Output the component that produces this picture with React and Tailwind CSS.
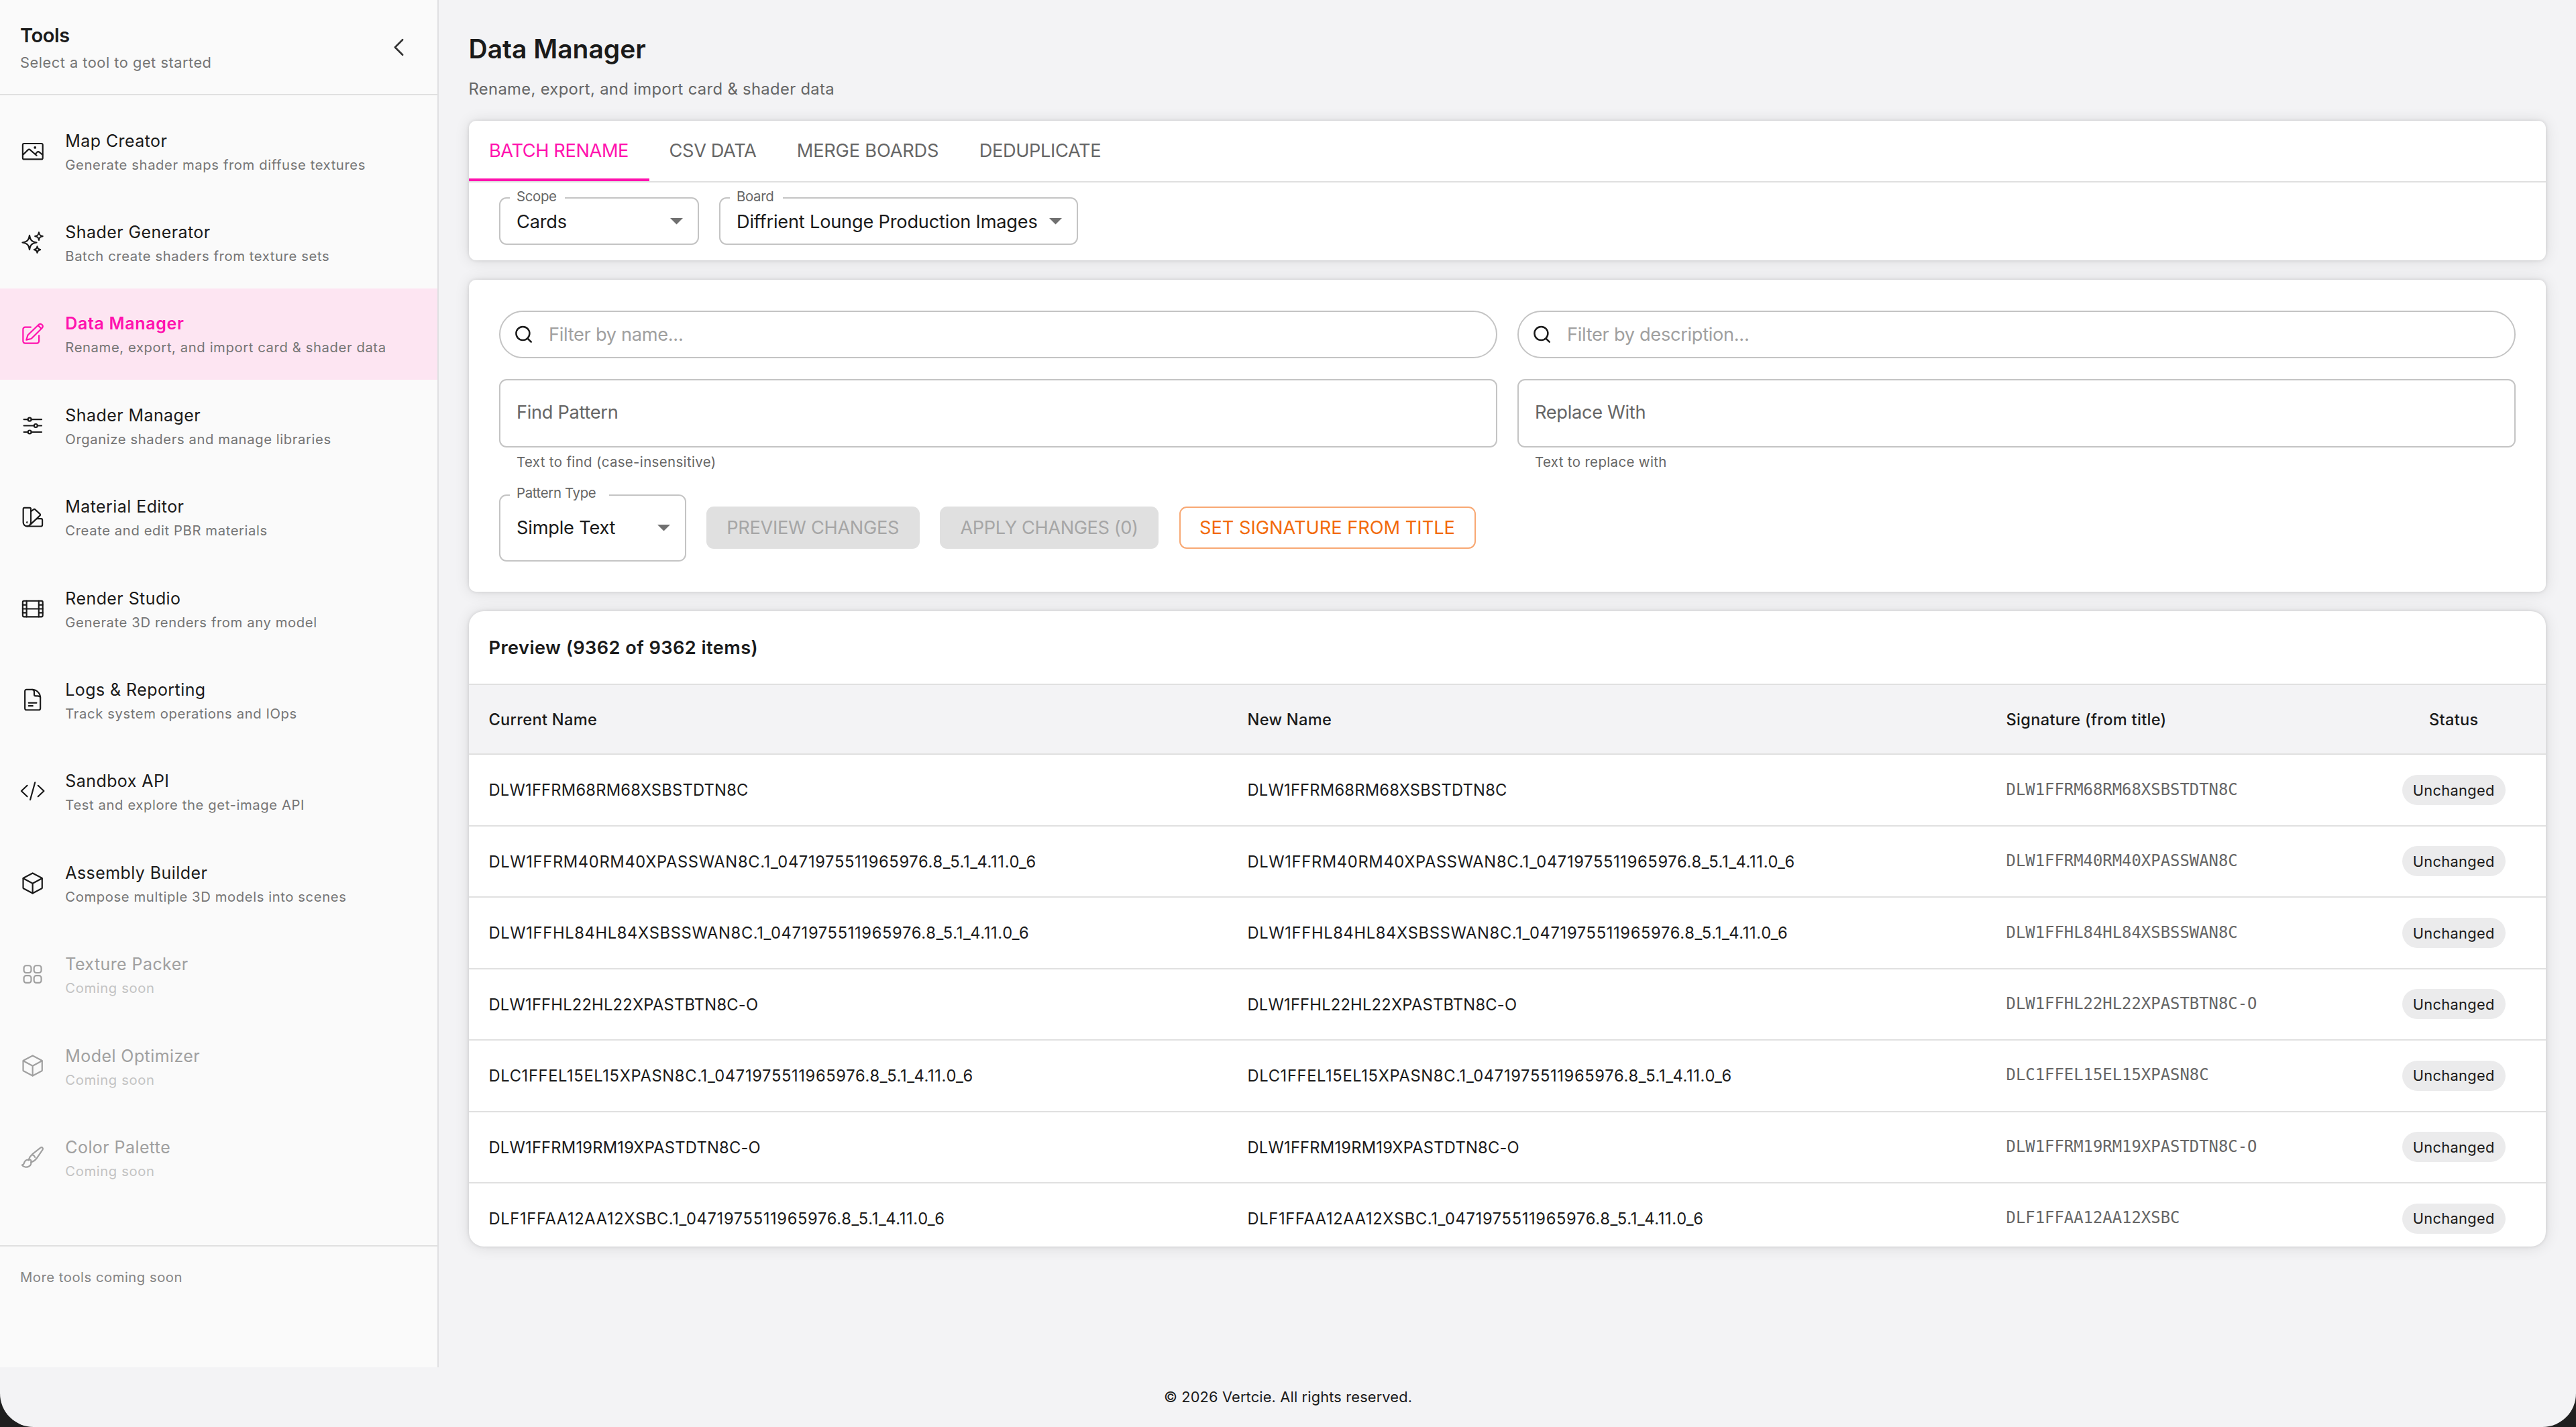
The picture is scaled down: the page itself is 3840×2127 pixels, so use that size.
const nav = [
  { icon: "image", title: "Map Creator", desc: "Generate shader maps from diffuse textures" },
  { icon: "sparkles", title: "Shader Generator", desc: "Batch create shaders from texture sets" },
  { icon: "edit", title: "Data Manager", desc: "Rename, export, and import card & shader data", active: true },
  { icon: "sliders", title: "Shader Manager", desc: "Organize shaders and manage libraries" },
  { icon: "swatch", title: "Material Editor", desc: "Create and edit PBR materials" },
  { icon: "film", title: "Render Studio", desc: "Generate 3D renders from any model" },
  { icon: "doc", title: "Logs & Reporting", desc: "Track system operations and IOps" },
  { icon: "code", title: "Sandbox API", desc: "Test and explore the get-image API" },
  { icon: "cube", title: "Assembly Builder", desc: "Compose multiple 3D models into scenes" },
  { icon: "grid", title: "Texture Packer", desc: "Coming soon", disabled: true },
  { icon: "cube", title: "Model Optimizer", desc: "Coming soon", disabled: true },
  { icon: "brush", title: "Color Palette", desc: "Coming soon", disabled: true },
];

const rows = [
  { name: "DLW1FFRM68RM68XSBSTDTN8C", signature: "DLW1FFRM68RM68XSBSTDTN8C" },
  { name: "DLW1FFRM40RM40XPASSWAN8C.1_0471975511965976.8_5.1_4.11.0_6", signature: "DLW1FFRM40RM40XPASSWAN8C" },
  { name: "DLW1FFHL84HL84XSBSSWAN8C.1_0471975511965976.8_5.1_4.11.0_6", signature: "DLW1FFHL84HL84XSBSSWAN8C" },
  { name: "DLW1FFHL22HL22XPASTBTN8C-O", signature: "DLW1FFHL22HL22XPASTBTN8C-O" },
  { name: "DLC1FFEL15EL15XPASN8C.1_0471975511965976.8_5.1_4.11.0_6", signature: "DLC1FFEL15EL15XPASN8C" },
  { name: "DLW1FFRM19RM19XPASTDTN8C-O", signature: "DLW1FFRM19RM19XPASTDTN8C-O" },
  { name: "DLF1FFAA12AA12XSBC.1_0471975511965976.8_5.1_4.11.0_6", signature: "DLF1FFAA12AA12XSBC" },
];

const glyphs = {
  image: (
    <>
      <rect x="2.5" y="4.5" width="19.2" height="15.1" rx="1.3" />
      <path d="M2.6 15.4 7.4 10.7c.7-.7 1.7-.7 2.4 0l6 5.2" />
      <path d="M14.7 14.6l1.3-1.6c.6-.8 1.8-.9 2.5-.2l3 2.5" />
      <circle cx="14.3" cy="8.3" r="0.5" fill="currentColor" />
    </>
  ),
  sparkles: (
    <>
      <path d="M9 5.1c.7 4.6 2.2 6.1 6.8 6.8-4.6.7-6.1 2.2-6.8 6.8-.7-4.6-2.2-6.1-6.8-6.8C6.8 11.2 8.3 9.7 9 5.1Z" />
      <path d="M18 2.2c.4 2.5 1.2 3.3 3.7 3.7-2.5.4-3.3 1.2-3.7 3.7-.4-2.5-1.2-3.3-3.7-3.7 2.5-.4 3.3-1.2 3.7-3.7Z" />
      <path d="M16.4 15.7c.3 2 1 2.7 3 3-2 .3-2.7 1-3 3-.3-2-1-2.7-3-3 2-.3 2.7-1 3-3Z" />
    </>
  ),
  edit: (
    <>
      <path d="M10.2 5.6H4.8a2 2 0 0 0-2 2V19a2 2 0 0 0 2 2h11.300a2 2 0 0 0 2-2v-5.4" />
      <path d="M6 17.800l1.200-4.100c.1-.3.3-.6.5-.8L18.100 2.900a2.300 2.300 0 0 1 3.200 3.200L11.100 16.200c-.2.2-.5.4-.8.5L6 17.800Z" />
      <path d="M17.200 3.900l2.900 2.900" />
    </>
  ),
  sliders: (
    <>
      <path d="M3.600 5.900h3.900M10.700 5.900h9.900M3.600 11.900h9.800M16.600 11.900h4M3.600 18h3.900M10.700 18h9.900" />
      <circle cx="9.100" cy="5.900" r="1.600" />
      <circle cx="15" cy="11.900" r="1.600" />
      <circle cx="9.100" cy="18" r="1.600" />
    </>
  ),
  swatch: (
    <>
      <path d="M4.200 3.100h4.900a1.200 1.200 0 0 1 1.200 1.200V17.200a3.650 3.650 0 0 1-7.300 0V4.300a1.200 1.200 0 0 1 1.200-1.200Z" />
      <path d="M10.500 6.600l2.200-1.700c.6-.5 1.300-.5 1.800 0l4.400 4c.6.5.6 1.300 0 1.800L9.300 19.700" />
      <path d="M16.300 13.600h3.800a1.200 1.200 0 0 1 1.200 1.200v4.900a1.200 1.200 0 0 1-1.200 1.200H6.600" />
      <circle cx="6.700" cy="17.200" r="0.250" fill="currentColor" />
    </>
  ),
  film: (
    <>
      <rect x="2.5" y="4.300" width="19.200" height="15.200" rx="1.300" />
      <path d="M6.200 4.300v15.200M17.900 4.300v15.200M6.200 11.900h11.700M2.500 8.100h3.700M2.500 11.900h3.700M2.500 15.700h3.700M17.900 8.100h3.800M17.900 11.900h3.800M17.900 15.700h3.800" />
    </>
  ),
  doc: (
    <>
      <path d="M11.500 1.900H6a1.400 1.400 0 0 0-1.400 1.400v16.700a1.400 1.400 0 0 0 1.400 1.400h12a1.400 1.400 0 0 0 1.400-1.400V9.800c0-4.400-3.500-7.900-7.900-7.900Z" />
      <path d="M11.500 1.900c1.300 0 2 1 2 2.200v2.500c0 .8.500 1.400 1.400 1.400h1.800c1.400 0 2.700.6 2.700 1.800M8.200 14.600h7.500M8.200 17.500h3.900" />
    </>
  ),
  code: <path d="M6.800 6.300 1.200 11.600l5.600 5.300M17.200 6.300l5.600 5.300-5.600 5.300M14.300 3.400 9.700 20" />,
  cube: (
    <>
      <path d="M12 2.200l8.900 4.700c.2.100.2.300.2.500v9c0 .2-.1.400-.3.500L12 21.600l-8.800-4.700c-.2-.1-.3-.3-.3-.5v-9c0-.2 0-.4.200-.5L12 2.200Z" />
      <path d="M3 7.200l9 4.900 9-4.900M12 12.100v9.400" />
    </>
  ),
  grid: (
    <>
      <rect x="3.600" y="3.400" width="7" height="6.900" rx="2.200" />
      <rect x="13.300" y="3.400" width="7" height="6.900" rx="2.200" />
      <rect x="3.600" y="13" width="7" height="6.900" rx="2.200" />
      <rect x="13.300" y="13" width="7" height="6.900" rx="2.200" />
    </>
  ),
  brush: (
    <>
      <path d="M8 14.300c.7-2.200 2-4.300 3.900-5.900l7.700-6c1.400-1 2.900.4 2 1.900l-5.400 7.800c-1.400 2-3.300 3.400-5.500 4.200" />
      <path d="M8 14.300c.6-.7 1.400-.8 2.100-.1.600.6.800 1.500.6 2.100M11.900 9.300c1.200.3 2 1.100 2.400 2.300" />
      <path d="M8.700 14.200c-1.700-.8-3.700.1-4.500 1.900-.5 1.200-.6 2.600-2.400 2.900 1.200 2.100 4.600 2.600 6.700 1.300 1.500-.9 2.300-2.500 1.900-4.100" />
    </>
  ),
};

function Icon({ name }) {
  return (
    <svg
      viewBox="0 0 24 24"
      fill="none"
      stroke="currentColor"
      strokeWidth="1.4"
      strokeLinecap="round"
      strokeLinejoin="round"
      className="size-[37.3px] shrink-0"
    >
      {glyphs[name]}
    </svg>
  );
}

function NavItem({ item }) {
  const row = item.active ? "bg-[#fde5f2] text-[#ff12ae]" : item.disabled ? "text-[#a0a0a0]" : "text-[#1a1a1a]";
  const title = item.active ? "font-semibold tracking-[0.65px]" : "tracking-[0.42px]";
  const desc = item.disabled ? "text-[#c3c3c3]" : "text-[#757575]";
  return (
    <li className={`flex h-[136.4px] items-center gap-[30px] pl-[30px] ${row}`}>
      <Icon name={item.icon} />
      <div className="pt-[4px]">
        <div className={`text-[25px] leading-[37px] ${title}`}>{item.title}</div>
        <div className={`text-[20.3px] leading-[34px] tracking-[0.58px] ${desc}`}>{item.desc}</div>
      </div>
    </li>
  );
}

function Sidebar() {
  return (
    <aside className="flex h-[2038px] w-[654px] shrink-0 flex-col border-r-2 border-[#e0e0e2] bg-[#fafafa]">
      <div className="flex h-[142px] items-center justify-between border-b-2 border-[#e0e0e0] pr-[35px] pl-[30px]">
        <div className="pt-[3px]">
          <h2 className="text-[29px] leading-[38px] font-semibold tracking-[-0.4px]">Tools</h2>
          <p className="mt-[5px] text-[21.8px] leading-[32px] tracking-[0.51px] text-[#757575]">
            Select a tool to get started
          </p>
        </div>
        <svg
          viewBox="0 0 24 24"
          fill="none"
          stroke="#333333"
          strokeWidth="1.4"
          strokeLinecap="round"
          strokeLinejoin="round"
          className="size-[45px]"
        >
          <path d="M15 6l-6 6 6 6" />
        </svg>
      </div>
      <ul className="flex-1 pt-[15px]">
        {nav.map((item) => (
          <NavItem key={item.title} item={item} />
        ))}
      </ul>
      <div className="h-[182px] border-t-2 border-[#e0e0e0] pt-[31px] pl-[30px] text-[20.3px] leading-[30px] tracking-[0.5px] text-[#858585]">
        More tools coming soon
      </div>
    </aside>
  );
}

function Select({ label, value, labelClass, className }) {
  return (
    <div
      className={`relative flex shrink-0 items-center justify-between rounded-[11px] border-2 border-[#c4c4c4] pr-[22px] pl-[24px] ${className}`}
    >
      <span
        className={`absolute top-[-15.5px] left-[14px] bg-white pl-[10px] text-[20.4px] leading-[24px] tracking-[-0.35px] whitespace-nowrap text-[#666666] ${labelClass}`}
      >
        {label}
      </span>
      <span className="pt-[1.5px] text-[27.2px] leading-[40px] tracking-[-0.2px] whitespace-nowrap">{value}</span>
      <svg viewBox="0 0 20 10" className="h-[9.5px] w-[19px]">
        <path d="M0 0h20L10 10z" fill="#707070" />
      </svg>
    </div>
  );
}

function SearchField({ placeholder }) {
  return (
    <div className="flex h-[71px] items-center gap-[24px] rounded-full border-2 border-[#c4c4c4] pl-[20px]">
      <svg viewBox="0 0 28 28" fill="none" stroke="#1a1a1a" strokeWidth="2.5" strokeLinecap="round" className="size-[28px]">
        <circle cx="13.4" cy="13" r="10" />
        <path d="M20.5 20.5l5.2 5.2" />
      </svg>
      <span className="pt-[2px] text-[27.2px] leading-[40px] tracking-[-0.3px] text-[#a0a0a0]">{placeholder}</span>
    </div>
  );
}

function PatternField({ label, helper }) {
  return (
    <div>
      <div className="flex h-[102px] items-center rounded-[11px] border-2 border-[#c4c4c4] pl-[24px] text-[27.2px] tracking-[-0.3px] text-[#666666]">
        {label}
      </div>
      <p className="mt-[7.5px] pl-[26px] text-[20.4px] leading-[30px] tracking-[0.38px] text-[#666666]">{helper}</p>
    </div>
  );
}

const card = "bg-white shadow-[0_0_5px_rgba(0,0,0,0.12),0_1px_22px_rgba(0,0,0,0.11)]";
const tab = "flex items-center justify-center border-b-4 pt-[5px]";
const button = "flex h-[63.5px] items-center justify-center rounded-[11px] pt-[2px] text-[27.2px] whitespace-nowrap";
const columns = "grid grid-cols-[1131px_1131px_560px_1fr] items-center border-b-2 border-[#e0e0e0]";

export default function App() {
  return (
    <div className="h-[2127px] w-[3840px] overflow-hidden bg-[#1f1f1f] font-['Inter',sans-serif] text-[#1a1a1a]">
      <div className="flex h-full flex-col overflow-hidden rounded-b-[50px] bg-[#f3f3f5]">
        <div className="flex h-[2038px]">
          <Sidebar />
          <main className="flex-1 pt-[45px] pr-[45px] pl-[44.5px]">
            <h1 className="text-[39px] leading-[56px] font-semibold">Data Manager</h1>
            <p className="mt-[13.5px] text-[23.8px] leading-[36px] tracking-[0.33px] text-[#666666]">
              Rename, export, and import card &amp; shader data
            </p>

            <section className={`mt-[29.5px] h-[207.5px] rounded-[11px] ${card}`}>
              <div className="flex h-[92px] border-b-2 border-[#e0e0e0] text-[27.2px] tracking-[-0.38px] text-[#666666]">
                <div className={`w-[269px] border-[#ff12ae] text-[#ff12ae] ${tab}`}>BATCH RENAME</div>
                <div className={`w-[190px] border-transparent ${tab}`}>CSV DATA</div>
                <div className={`w-[272px] border-transparent tracking-[-0.18px] ${tab}`}>MERGE BOARDS</div>
                <div className={`w-[242px] border-transparent ${tab}`}>DEDUPLICATE</div>
              </div>
              <div className="flex gap-[30.5px] pt-[22.3px] pl-[45.5px]">
                <Select label="Scope" value="Cards" labelClass="w-[82px]" className="h-[71px] w-[297.5px]" />
                <Select
                  label="Board"
                  value="Diffrient Lounge Production Images"
                  labelClass="w-[79px]"
                  className="h-[71px] w-[534.5px]"
                />
              </div>
            </section>

            <section className={`mt-[29px] h-[465px] rounded-[11px] px-[45.5px] pt-[46px] ${card}`}>
              <div className="grid grid-cols-2 gap-x-[30.5px] gap-y-[31px]">
                <SearchField placeholder="Filter by name..." />
                <SearchField placeholder="Filter by description..." />
                <PatternField label="Find Pattern" helper="Text to find (case-insensitive)" />
                <PatternField label="Replace With" helper="Text to replace with" />
              </div>
              <div className="mt-[32.5px] flex items-center gap-[30.5px]">
                <Select label="Pattern Type" value="Simple Text" labelClass="w-[148px]" className="h-[100px] w-[278.5px]" />
                <div className={`w-[317.5px] bg-[#e0e0e0] tracking-[-0.3px] text-[#a6a6a6] ${button}`}>PREVIEW CHANGES</div>
                <div className={`w-[326px] bg-[#e0e0e0] tracking-[-0.4px] text-[#a6a6a6] ${button}`}>APPLY CHANGES (0)</div>
                <div className={`w-[442px] border-2 border-[#f8a873] text-[#f26a0a] ${button}`}>
                  SET SIGNATURE FROM TITLE
                </div>
              </div>
            </section>

            <section className={`mt-[29.5px] h-[947px] overflow-hidden rounded-[22px] ${card}`}>
              <h3 className="flex h-[110.3px] items-center border-b-2 border-[#e0e0e0] pt-[2.5px] pl-[30px] text-[27.2px] font-semibold tracking-[0.43px]">
                Preview (9362 of 9362 items)
              </h3>
              <div className={`h-[104px] bg-[#f3f3f5] text-[23.6px] font-medium tracking-[0.3px] ${columns}`}>
                <div className="pl-[30px]">Current Name</div>
                <div className="pl-[30px]">New Name</div>
                <div className="pl-[30px]">Signature (from title)</div>
                <div className="text-center">Status</div>
              </div>
              {rows.map((row) => (
                <div
                  key={row.name}
                  className={`h-[106.46px] text-[23.7px] ${row.name.includes("_") ? "tracking-[0.66px]" : "tracking-[0.23px]"} ${columns}`}
                >
                  <div className="pt-[1px] pl-[30px]">{row.name}</div>
                  <div className="pt-[1px] pl-[30px]">{row.name}</div>
                  <div className="pl-[30px] font-['DejaVu_Sans_Mono',monospace] text-[23.9px] tracking-normal text-[#666666]">
                    {row.signature}
                  </div>
                  <div className="flex justify-center">
                    <span className="flex h-[45px] w-[154px] items-center justify-center rounded-full bg-[#ebebec] pt-[1px] text-[21.8px] tracking-[0.34px]">
                      Unchanged
                    </span>
                  </div>
                </div>
              ))}
            </section>
          </main>
        </div>
        <footer className="flex flex-1 items-center justify-center text-[21.8px] tracking-[0.15px]">
          © 2026 Vertcie. All rights reserved.
        </footer>
      </div>
    </div>
  );
}
